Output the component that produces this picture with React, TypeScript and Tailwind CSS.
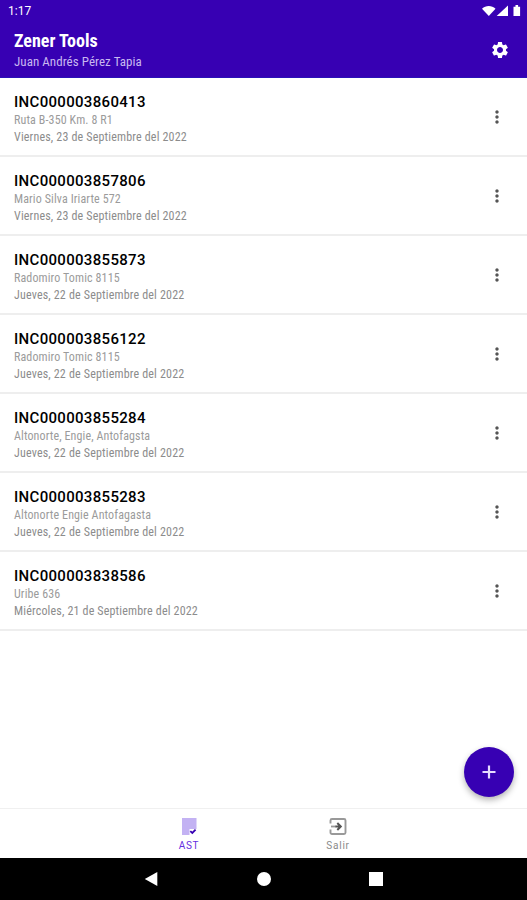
import { MdSettings, MdMoreVert } from "react-icons/md";

const INCIDENTS = [
  { id: "INC000003860413", address: "Ruta B-350 Km. 8 R1", date: "Viernes, 23 de Septiembre del 2022" },
  { id: "INC000003857806", address: "Mario Silva Iriarte 572", date: "Viernes, 23 de Septiembre del 2022" },
  { id: "INC000003855873", address: "Radomiro Tomic 8115", date: "Jueves, 22 de Septiembre del 2022" },
  { id: "INC000003856122", address: "Radomiro Tomic 8115", date: "Jueves, 22 de Septiembre del 2022" },
  { id: "INC000003855284", address: "Altonorte, Engie, Antofagsta", date: "Jueves, 22 de Septiembre del 2022" },
  { id: "INC000003855283", address: "Altonorte Engie Antofagasta", date: "Jueves, 22 de Septiembre del 2022" },
  { id: "INC000003838586", address: "Uribe 636", date: "Miércoles, 21 de Septiembre del 2022" },
];

function StatusBar() {
  return (
    <div className="flex h-[22px] items-center justify-between pl-2 pr-[6px] text-white">
      <span className="font-[Roboto,sans-serif] text-[12px] leading-none">1:17</span>
      <svg width="39" height="13" viewBox="0 0 39 13" fill="currentColor" aria-hidden>
        <path d="M0 3.7C3.7 0.2 9.8 0.2 13.5 3.7L6.8 11z" />
        <path d="M26 0.5V11H14.7z" />
        <path d="M31.5 1.7h2V0h2.6v1.7h2V11h-6.6z" />
      </svg>
    </div>
  );
}

function Header() {
  return (
    <header className="h-[78px] border-b border-[#2a12b8] bg-[#3700b3]">
      <StatusBar />
      <div className="flex h-[55px] items-center justify-between pl-[14px] pr-[17px] text-white">
        <div className="pt-[3px]">
          <h1 className="text-[18px] font-bold leading-[21px]">Zener Tools</h1>
          <p className="text-[13px] leading-[21px] tracking-[0.05px] text-[#c8b8f0]">Juan Andrés Pérez Tapia</p>
        </div>
        <MdSettings size={20} />
      </div>
    </header>
  );
}

function IncidentRow({ id, address, date }: { id: string; address: string; date: string }) {
  return (
    <li className="flex h-[79px] items-center justify-between border-b-2 border-[#eeeeee] pl-[14px] pr-5">
      <div className="pt-[5px]">
        <h2 className="font-[Roboto,sans-serif] text-[15px] font-medium leading-[19px] tracking-[0.32px] text-black">
          {id}
        </h2>
        <p className="text-[12px] leading-[17px] tracking-[0.12px] text-[#9b9b9b]">{address}</p>
        <p className="text-[12px] leading-[17px] tracking-[0.17px] text-[#8c8c8c]">{date}</p>
      </div>
      <MdMoreVert size={20} className="text-[#555]" />
    </li>
  );
}

function BottomNav() {
  return (
    <nav className="flex h-[50px] justify-center border-t border-[#f0f0f0] bg-white font-[Roboto,sans-serif] text-[10px] leading-3">
      <div className="flex w-[149px] flex-col items-center pt-2 text-[#6430e0]">
        <svg width="18" height="20" viewBox="0 0 18 20" aria-hidden>
          <path d="M2 1h14.5v11H9.5V18H2z" fill="#c3b2f3" />
          <path d="M10.300 14.200l2 1.800 3.300-3.300" fill="none" stroke="#3700b3" strokeWidth="1.8" />
        </svg>
        <span className="mt-[3px] tracking-[0.7px]">AST</span>
      </div>
      <div className="flex w-[149px] flex-col items-center pt-2 text-[#8a8a8a]">
        <svg width="18" height="20" viewBox="0 0 18 20" fill="none" aria-hidden>
          <path
            d="M1.5 6.5v-3a1.5 1.5 0 0 1 1.5-1.5h12a1.5 1.5 0 0 1 1.5 1.5v12a1.5 1.5 0 0 1-1.5 1.5h-12a1.5 1.5 0 0 1-1.5-1.5v-3"
            stroke="#999"
            strokeWidth="1.9"
          />
          <path d="M2 9.5h5" stroke="#999" strokeWidth="1.8" />
          <path d="M6.5 9.5h5M8.3 6l3.5 3.5L8.3 13" stroke="#555" strokeWidth="2" />
        </svg>
        <span className="mt-[3px] tracking-[0.8px]">Salir</span>
      </div>
    </nav>
  );
}

function SystemBar() {
  return (
    <div className="flex h-[42px] items-center justify-center gap-[98px] bg-black text-white">
      <svg width="15" height="16" viewBox="0 0 15 16" fill="currentColor" aria-hidden>
        <path d="M13.3 1v14L0.8 8z" />
      </svg>
      <span className="size-[14px] rounded-full bg-white" />
      <span className="size-[14px] bg-white" />
    </div>
  );
}

export default function App() {
  return (
    <div className="relative flex h-[900px] w-[527px] flex-col overflow-hidden bg-white font-['Roboto_Condensed',Roboto,sans-serif]">
      <Header />
      <ul className="flex-1">
        {INCIDENTS.map((incident) => (
          <IncidentRow key={incident.id} {...incident} />
        ))}
      </ul>
      <button
        aria-label="Agregar"
        className="absolute bottom-[103px] right-[13px] flex size-[50px] items-center justify-center rounded-full bg-[#3700b3] text-[#e6dcff] shadow-[0_3px_6px_rgba(0,0,0,0.3)]"
      >
        <svg width="14" height="14" viewBox="0 0 14 14" aria-hidden>
          <path d="M7 0.5v13M0.5 7h13" stroke="currentColor" strokeWidth="2.2" />
        </svg>
      </button>
      <BottomNav />
      <SystemBar />
    </div>
  );
}
